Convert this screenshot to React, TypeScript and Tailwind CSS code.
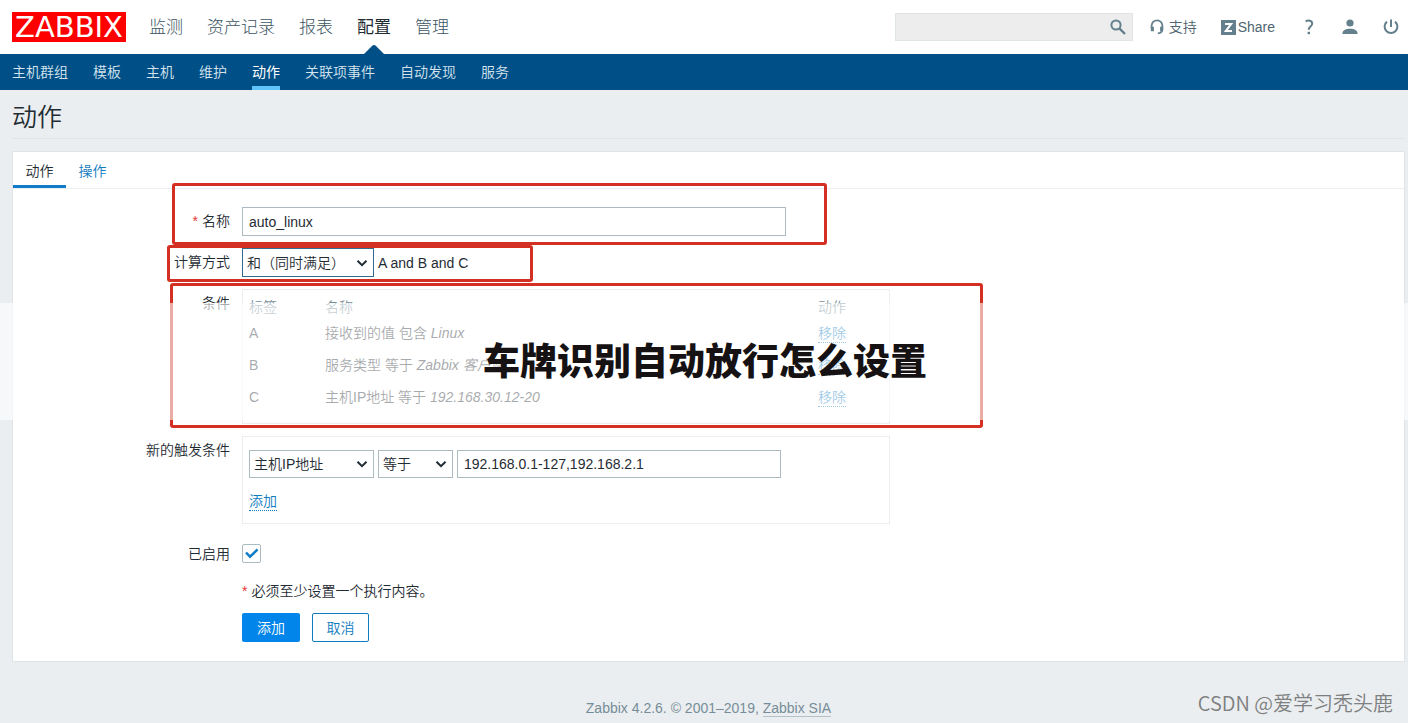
import React, { useState } from 'react';

const mainMenu = ['监测', '资产记录', '报表', '配置', '管理'];

const subMenu = [
  '主机群组',
  '模板',
  '主机',
  '维护',
  '动作',
  '关联项事件',
  '自动发现',
  '服务',
];

const conditions = [
  { label: 'A', text: '接收到的值 包含', value: 'Linux' },
  { label: 'B', text: '服务类型 等于', value: 'Zabbix 客户端' },
  { label: 'C', text: '主机IP地址 等于', value: '192.168.30.12-20' },
];

interface SelectProps {
  id: string;
  label?: string;
  className: string;
  options: string[];
}

const Select: React.FC<SelectProps> = ({ id, label, className, options }) => (
  <div className="relative">
    <select
      id={id}
      aria-label={label}
      className={`${className} appearance-none border bg-white pl-1 pr-6 outline-none`}
    >
      {options.map(option => (
        <option key={option}>{option}</option>
      ))}
    </select>
    <svg
      className="pointer-events-none absolute right-1.5 top-1/2 h-3 w-3 -translate-y-1/2"
      viewBox="0 0 12 12"
      fill="none"
      stroke="#1f2c33"
      strokeWidth="2"
    >
      <path d="M1.5 3.8 6 8.2l4.5-4.4" />
    </svg>
  </div>
);

interface RowProps {
  label?: string;
  htmlFor?: string;
  required?: boolean;
  className?: string;
  children: React.ReactNode;
}

const Row: React.FC<RowProps> = ({
  label,
  htmlFor,
  required,
  className = '',
  children,
}) => (
  <div className={`flex gap-3 ${className}`}>
    <div className="w-[217px] shrink-0 pt-1 text-right leading-5">
      {required && <span className="mr-1 text-[#e33734]">*</span>}
      {label && <label htmlFor={htmlFor}>{label}</label>}
    </div>
    {children}
  </div>
);

const Header: React.FC = () => (
  <header>
    <div className="flex h-[54px] items-center bg-white pl-3 pr-[9px]">
      <a
        href="#home"
        className="flex h-[30px] w-[114px] items-center justify-center bg-[#f00] font-['DejaVu_Sans'] text-[29px] font-normal leading-[30px] text-white"
      >
        ZABBIX
      </a>
      <nav className="ml-[23px] flex gap-6 self-stretch text-[17px] font-light text-[#3c5563]">
        {mainMenu.map(item => (
          <a
            key={item}
            href="#menu"
            className={`relative flex items-center pt-0.5 ${
              item === '配置' ? 'font-normal text-[#1f2c33]' : ''
            }`}
          >
            {item}
            {item === '配置' && (
              <svg
                className="absolute bottom-0 left-1/2 h-[9px] w-5 -translate-x-1/2"
                viewBox="0 0 20 9"
                fill="#004f86"
              >
                <path d="M0 9 8.500 .6q1.500-1.200 3 0L20 9z" />
              </svg>
            )}
          </a>
        ))}
      </nav>
      <div className="ml-auto flex items-center text-[#64808d]">
        <form className="relative mr-4">
          <input
            type="text"
            aria-label="搜索"
            className="block h-7 w-[238px] border border-[#dfe4e7] bg-[#ededed] pl-2 pr-8 outline-none"
          />
          <button
            type="button"
            aria-label="搜索"
            className="absolute right-[7px] top-1.5"
          >
            <svg
              className="h-4 w-4"
              viewBox="0 0 16 16"
              fill="none"
              stroke="currentColor"
              strokeWidth="2"
            >
              <circle cx="6" cy="6" r="4.600" />
              <path d="m9.400 9.400 5.600 5.600" strokeWidth="2.400" />
            </svg>
          </button>
        </form>
        <a href="#support" className="mr-6 flex items-center gap-1">
          <svg
            className="h-4 w-4"
            viewBox="0 0 16 16"
            fill="none"
            stroke="currentColor"
            strokeWidth="1.800"
          >
            <path d="M2.600 10V6.800a5.400 5.400 0 0 1 10.800 0V10c0 3-1.400 4.200-4.600 4.400" />
            <path d="M3.400 7.800v4.400M12.600 7.800v4.400" strokeWidth="3" />
          </svg>
          <span className="text-[#4f6470]">支持</span>
        </a>
        <a href="#share" className="mr-[26px] flex items-center gap-[2px]">
          <svg className="h-[15px] w-[15px]" viewBox="0 0 15 15">
            <path d="M0 0h15v15H0z" fill="currentColor" />
            <path
              d="M4 3.900h6.200L4.800 11.100H11"
              fill="none"
              stroke="#fff"
              strokeWidth="2"
            />
          </svg>
          <span className="text-[#4f6470]">Share</span>
        </a>
        <a href="#help" aria-label="帮助" className="mr-[25px]">
          <svg
            className="h-4 w-4"
            viewBox="0 0 16 16"
            fill="none"
            stroke="currentColor"
            strokeWidth="2"
          >
            <path d="M4.600 2.500C7 .8 11.200 1.300 11.200 4.600c0 2.600-3.400 2.900-3.400 6.200" />
            <path d="M7.800 12.800v2.400" strokeWidth="2.400" />
          </svg>
        </a>
        <a href="#profile" aria-label="用户" className="mr-[25px]">
          <svg className="h-4 w-4" viewBox="0 0 16 16" fill="currentColor">
            <circle cx="8" cy="4" r="3.600" />
            <path d="M.4 15c0-3.600 3-5.200 7.600-5.200s7.600 1.600 7.600 5.200z" />
          </svg>
        </a>
        <a href="#logout" aria-label="退出">
          <svg
            className="h-4 w-4"
            viewBox="0 0 16 16"
            fill="none"
            stroke="currentColor"
            strokeWidth="2"
          >
            <path d="M4 2.600a6.400 6.400 0 1 0 8 0M8 .5v7.500" />
          </svg>
        </a>
      </div>
    </div>
    <nav className="flex h-9 gap-[25px] bg-[#004f86] px-3 text-[#d5e5f0]">
      {subMenu.map(item => (
        <a
          key={item}
          href="#submenu"
          className={`flex items-center border-b-4 pt-1 ${
            item === '动作'
              ? 'border-[#5fc4fb] font-normal text-white'
              : 'border-transparent'
          }`}
        >
          {item}
        </a>
      ))}
    </nav>
  </header>
);

const ConditionsTable: React.FC = () => (
  <div className="h-[135px] w-[648px] border border-[#ebeef0] px-1.5 pt-[7px]">
    <table className="w-full table-fixed text-left">
      <thead>
        <tr className="h-5 text-[#768d99]">
          <th className="w-[76px] font-[350] leading-5">标签</th>
          <th className="font-[350] leading-5">名称</th>
          <th className="w-[65px] font-[350] leading-5">动作</th>
        </tr>
      </thead>
      <tbody>
        {conditions.map(({ label, text, value }) => (
          <tr key={label} className="h-8">
            <td>{label}</td>
            <td>
              {text} <em>{value}</em>
            </td>
            <td>
              <button
                type="button"
                className="border-b border-dotted border-[#0f7cc0] leading-[17px] text-[#0f7cc0]"
              >
                移除
              </button>
            </td>
          </tr>
        ))}
      </tbody>
    </table>
  </div>
);

const App: React.FC = () => {
  const [enabled, setEnabled] = useState(true);

  return (
    <div className="relative flex min-h-screen flex-col bg-[#ebeef0] font-['Liberation_Sans','Noto_Sans_CJK_SC',sans-serif] text-[14px] font-[350] leading-5 text-[#1f2c33]">
      <Header />
      <main className="ml-3 mr-[3px]">
        <h1 className="h-[49px] border-b border-[#dfe4e7] pt-3 text-[25px] font-[350] leading-[30px]">
          动作
        </h1>
        <div className="relative mt-3 border border-[#dfe4e7] bg-white pb-[19px]">
          <div className="flex h-[37px] border-b border-[#ebeef0]">
            <button
              type="button"
              className="w-[53px] border-b-[3px] border-[#0f7cc8] pt-1"
            >
              动作
            </button>
            <button
              type="button"
              className="w-[53px] border-b-[3px] border-transparent pt-1 text-[#0f7cc0]"
            >
              操作
            </button>
          </div>
          <form className="flex flex-col gap-3 pt-[18px]">
            <Row label="名称" htmlFor="name" required>
              <input
                id="name"
                type="text"
                defaultValue="auto_linux"
                className="h-[29px] w-[544px] border border-[#acbbc2] px-1.5 outline-none"
              />
            </Row>
            <Row label="计算方式" htmlFor="evaltype">
              <div className="flex items-center gap-1">
                <Select
                  id="evaltype"
                  className="h-[29px] w-[132px] border-[#336a90]"
                  options={['和（同时满足）', '或', '自定义表达式']}
                />
                <span>A and B and C</span>
              </div>
            </Row>
            <Row label="条件">
              <ConditionsTable />
            </Row>
            <Row label="新的触发条件" htmlFor="new-type">
              <div className="w-[648px] border border-[#ebeef0] px-1.5 pb-3 pt-[13px]">
                <div className="flex gap-1">
                  <Select
                    id="new-type"
                    className="h-7 w-[125px] border-[#acbbc2]"
                    options={['主机IP地址', '服务类型', '接收到的值']}
                  />
                  <Select
                    id="new-operator"
                    label="运算符"
                    className="h-7 w-[75px] border-[#acbbc2]"
                    options={['等于', '不等于']}
                  />
                  <input
                    type="text"
                    aria-label="值"
                    defaultValue="192.168.0.1-127,192.168.2.1"
                    className="h-7 w-[324px] border border-[#acbbc2] px-1.5 outline-none"
                  />
                </div>
                <button
                  type="button"
                  className="mt-[15px] block border-b border-dotted border-[#0f7cc0] leading-[17px] text-[#0f7cc0]"
                >
                  添加
                </button>
              </div>
            </Row>
            <Row label="已启用" htmlFor="enabled" className="mt-1">
              <div className="relative mt-1 h-[19px] w-[19px]">
                <input
                  id="enabled"
                  type="checkbox"
                  checked={enabled}
                  onChange={() => setEnabled(!enabled)}
                  className="block h-full w-full appearance-none rounded-xs border border-[#acbbc2]"
                />
                {enabled && (
                  <svg
                    className="pointer-events-none absolute inset-0"
                    viewBox="0 0 19 19"
                    fill="none"
                    stroke="#0f7cc8"
                    strokeWidth="2.500"
                  >
                    <path d="m4 8.500 4 4.200 7.500-7.200" />
                  </svg>
                )}
              </div>
            </Row>
            <Row className="mt-[5px]">
              <p>
                <span className="mr-1 text-[#e33734]">*</span>
                必须至少设置一个执行内容。
              </p>
            </Row>
            <Row>
              <div className="flex gap-3">
                <button
                  type="button"
                  className="h-[29px] w-[58px] rounded-xs bg-[#0285ea] text-white"
                >
                  添加
                </button>
                <button
                  type="button"
                  className="h-[29px] w-[57px] rounded-xs border border-[#0f7cc0] text-[#0f7cc0]"
                >
                  取消
                </button>
              </div>
            </Row>
          </form>
          <div className="pointer-events-none absolute left-[159px] top-[31px] h-[62px] w-[655px] rounded-[3px] border-3 border-[#d32f22]" />
          <div className="pointer-events-none absolute left-[154px] top-[93px] h-[37px] w-[366px] rounded-[3px] border-3 border-[#d32f22]" />
          <div className="pointer-events-none absolute left-[157px] top-[131px] h-[145px] w-[813px] rounded-[3px] border-3 border-[#d32f22]" />
        </div>
      </main>
      <footer className="ml-3 mr-[3px] mt-auto pb-1 text-center leading-[22px] text-[#768d99]">
        Zabbix 4.2.6. © 2001–2019,{' '}
        <a href="#zabbix" className="border-b border-[#b4c1c8]">
          Zabbix SIA
        </a>
      </footer>
      <div className="pointer-events-none absolute inset-x-0 top-[303px] flex h-[117px] items-center justify-center bg-white/60 pb-1 pl-0.5">
        <strong className="font-['Noto_Sans_CJK_SC',sans-serif] text-[37px] font-black leading-none text-[#161213]">
          车牌识别自动放行怎么设置
        </strong>
      </div>
      <div className="pointer-events-none absolute bottom-1 right-[15px] font-['Noto_Sans_CJK_SC',sans-serif] text-[20px] font-[350] leading-8 text-[#7d7f80]">
        CSDN @爱学习秃头鹿
      </div>
    </div>
  );
};

export default App;
